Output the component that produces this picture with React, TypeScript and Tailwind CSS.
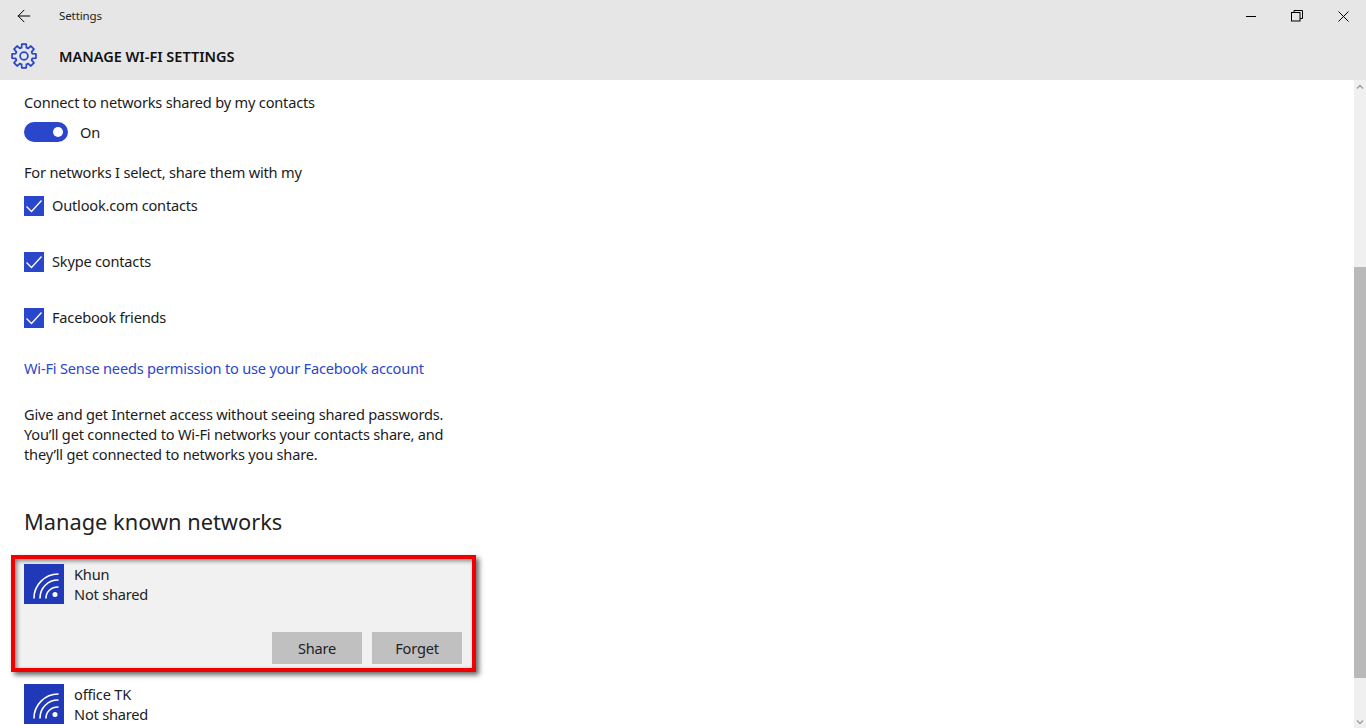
import { ArrowLeft } from 'lucide-react';

const blue = 'bg-[#2a47cc]';

function Gear() {
  const teeth = [0, 45, 90, 135, 180, 225, 270, 315];
  const outer: string[] = [];
  teeth.forEach((deg, i) => {
    const a = ((deg - 90) * Math.PI) / 180;
    const pt = (r: number, off: number) =>
      `${(12 + r * Math.cos(a + off)).toFixed(2)} ${(12 + r * Math.sin(a + off)).toFixed(2)}`;
    outer.push(`${i === 0 ? 'M' : 'L'}${pt(8, -0.28)} L${pt(11.2, -0.18)} L${pt(11.2, 0.18)} L${pt(8, 0.28)}`);
  });
  return (
    <svg width="26" height="26" viewBox="0 0 24 24" fill="none" stroke="#2a47cc" strokeWidth="1.6" strokeLinejoin="round">
      <path d={outer.join(' ') + ' Z'} />
      <circle cx="12" cy="12" r="3.6" />
    </svg>
  );
}

function WifiTile() {
  return (
    <div className="w-10 h-10 shrink-0 bg-[#2039b8]">
      <svg width="40" height="40" viewBox="0 0 40 40" fill="none" stroke="#fff" strokeWidth="1.6" strokeLinecap="round">
        <path d="M10 34C10 21 21 10 34 10" />
        <path d="M16 34C16 24 24 16 34 16" />
        <path d="M22 34C22 28 27 23 34 23" />
        <circle cx="31" cy="30.5" r="2.5" fill="#fff" stroke="none" />
      </svg>
    </div>
  );
}

function Check({ label, mb = 'mb-[35px]' }: { label: string; mb?: string }) {
  return (
    <div className={`flex items-center gap-2 h-[21px] ${mb}`}>
      <div className={`w-5 h-5 ${blue} flex items-center justify-center`}>
        <svg width="20" height="20" viewBox="0 0 20 20" fill="none" stroke="#fff" strokeWidth="1.3">
          <path d="M2.5 10.5L7.5 15.5L17.5 4.5" />
        </svg>
      </div>
      <span>{label}</span>
    </div>
  );
}

function NetworkRow({ name }: { name: string }) {
  return (
    <div className="flex gap-2.5">
      <WifiTile />
      <div className="leading-5 text-[#222]">
        <div>{name}</div>
        <div>Not shared</div>
      </div>
    </div>
  );
}

export default function App() {
  return (
    <div className="w-[1366px] h-[728px] overflow-hidden bg-white flex flex-col text-[14.6px] text-[#1c1c1c] font-['Noto_Sans','Open_Sans',sans-serif] tracking-[-0.2px]">
      <header className="h-20 shrink-0 bg-[#e6e6e6]">
        <div className="h-8 flex items-center">
          <div className="w-[59px] pl-[14px]">
            <ArrowLeft size={20} strokeWidth={1.2} className="text-black" />
          </div>
          <span className="text-[11.5px] text-[#222] tracking-[-0.1px]">Settings</span>
          <div className="ml-auto flex items-center">
            <div className="w-[46px] flex justify-center">
              <div className="w-2.5 h-px bg-black" />
            </div>
            <div className="w-[46px] flex justify-center">
              <svg width="12" height="12" viewBox="0 0 12 12" fill="none" stroke="#000">
                <rect x="0.5" y="2.5" width="8.5" height="8.5" />
                <path d="M3 2.5V0.5H11.5V8.5H9" />
              </svg>
            </div>
            <div className="w-[46px] flex justify-center">
              <svg width="11" height="11" viewBox="0 0 11 11" stroke="#000">
                <path d="M0.5 0.5L10.5 10.5M10.5 0.5L0.5 10.5" />
              </svg>
            </div>
          </div>
        </div>
        <div className="h-12 flex items-center">
          <div className="w-[59px] pl-[11px]">
            <Gear />
          </div>
          <span className="pt-0.5 text-[14.5px] font-semibold text-[#111] tracking-normal">MANAGE WI-FI SETTINGS</span>
        </div>
      </header>

      <div className="flex-1 flex min-h-0">
        <main className="flex-1 min-w-0 pt-3 flex flex-col items-start">
          <div className="pl-6 h-[21px] leading-[21px]">Connect to networks shared by my contacts</div>
          <div className="pl-6 mt-[9px] flex items-center gap-3 h-5">
            <div className={`w-11 h-5 rounded-full ${blue} flex items-center justify-end pr-[5px]`}>
              <div className="w-2.5 h-2.5 rounded-full bg-white" />
            </div>
            <span className="pt-0.5">On</span>
          </div>
          <div className="pl-6 mt-5 h-[21px] leading-[21px]">For networks I select, share them with my</div>
          <div className="pl-6 mt-3">
            <Check label="Outlook.com contacts" />
            <Check label="Skype contacts" />
            <Check label="Facebook friends" mb="mb-0" />
          </div>
          <div className="pl-6 mt-[30px] h-[21px] leading-[21px] text-[#2a47cc]">Wi-Fi Sense needs permission to use your Facebook account</div>
          <div className="pl-6 mt-[25px] leading-5">
            <div>Give and get Internet access without seeing shared passwords.</div>
            <div>You’ll get connected to Wi-Fi networks your contacts share, and</div>
            <div>they’ll get connected to networks you share.</div>
          </div>
          <h2 className="pl-6 mt-[42px] text-[21.8px] leading-8 text-[#222] tracking-normal">Manage known networks</h2>

          <section className="ml-[11px] mt-[17px] w-[465px] h-[117px] border-4 border-[#f00000] bg-[#f1f1f1] shadow-[3px_3px_5px_rgba(0,0,0,0.6),inset_2px_2px_4px_rgba(0,0,0,0.45)] pl-[9px] pt-[5px] pr-[10px] flex flex-col">
            <NetworkRow name="Khun" />
            <div className="mt-auto mb-1 flex justify-end gap-2.5">
              <button type="button" className="w-[90px] h-8 pt-0.5 bg-[#c0c0c0] text-[#222]">Share</button>
              <button type="button" className="w-[90px] h-8 pt-0.5 bg-[#c0c0c0] text-[#222]">Forget</button>
            </div>
          </section>

          <div className="pl-6 mt-3">
            <NetworkRow name="office TK" />
          </div>
        </main>

        <aside className="w-3 shrink-0 bg-[#f0f0f0] flex flex-col">
          <div className="h-3 flex items-center justify-center">
            <svg width="8" height="5" viewBox="0 0 8 5" fill="none" stroke="#a0a0a0" strokeWidth="1.5">
              <path d="M1 4.5L4 1.5L7 4.5" />
            </svg>
          </div>
          <div className="mt-[175px] h-[411px] bg-[#b9b9b9]" />
          <div className="mt-auto h-3 flex items-center justify-center">
            <svg width="8" height="5" viewBox="0 0 8 5" fill="none" stroke="#a0a0a0" strokeWidth="1.5">
              <path d="M1 0.5L4 3.5L7 0.5" />
            </svg>
          </div>
        </aside>
      </div>
    </div>
  );
}
